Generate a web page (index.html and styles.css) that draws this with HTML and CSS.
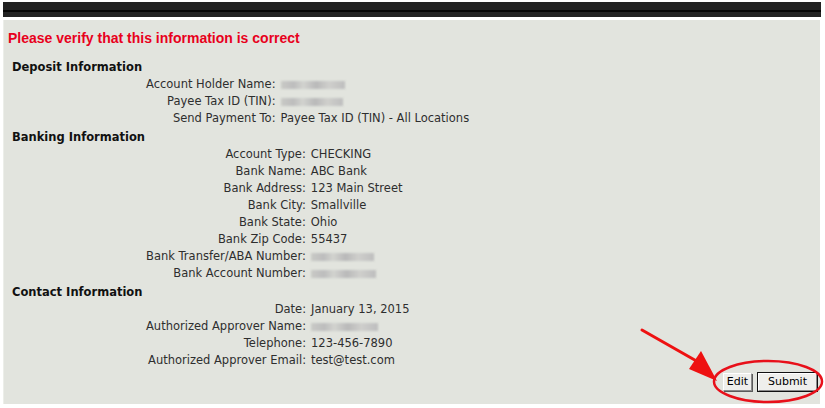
FILE: index.html
```html
<!DOCTYPE html>
<html>
<head>
<meta charset="utf-8">
<link rel="stylesheet" href="styles.css">
</head>
<body>
<div class="topbar"><div class="topbar-line"></div></div>
<div class="panel">
  <div class="title">Please verify that this information is correct</div>

  <div class="section-head">Deposit Information</div>
  <div class="fields">
    <div class="label">Account Holder Name:</div><div class="value"><span class="redacted w64"></span></div>
    <div class="label">Payee Tax ID (TIN):</div><div class="value"><span class="redacted w62"></span></div>
    <div class="label">Send Payment To:</div><div class="value">Payee Tax ID (TIN) - All Locations</div>
  </div>

  <div class="section-head">Banking Information</div>
  <div class="fields">
    <div class="label">Account Type:</div><div class="value">CHECKING</div>
    <div class="label">Bank Name:</div><div class="value">ABC Bank</div>
    <div class="label">Bank Address:</div><div class="value">123 Main Street</div>
    <div class="label">Bank City:</div><div class="value">Smallville</div>
    <div class="label">Bank State:</div><div class="value">Ohio</div>
    <div class="label">Bank Zip Code:</div><div class="value">55437</div>
    <div class="label">Bank Transfer/ABA Number:</div><div class="value"><span class="redacted w63"></span></div>
    <div class="label">Bank Account Number:</div><div class="value"><span class="redacted w65"></span></div>
  </div>

  <div class="section-head">Contact Information</div>
  <div class="fields">
    <div class="label">Date:</div><div class="value">January 13, 2015</div>
    <div class="label">Authorized Approver Name:</div><div class="value"><span class="redacted w67"></span></div>
    <div class="label">Telephone:</div><div class="value">123-456-7890</div>
    <div class="label">Authorized Approver Email:</div><div class="value">test@test.com</div>
  </div>

  <div class="actions">
    <button class="btn btn-edit">Edit</button>
    <button class="btn btn-default">Submit</button>
  </div>
</div>

<svg class="annotation" width="825" height="408" viewBox="0 0 825 408">
  <line x1="642" y1="330" x2="700" y2="363" stroke="#ee1111" stroke-width="3" stroke-linecap="round"/>
  <polygon points="701,351 689,369 717,381" fill="#ee1111"/>
  <ellipse cx="768" cy="381.5" rx="54" ry="20.5" fill="none" stroke="#e8101a" stroke-width="2.5"/>
</svg>
</body>
</html>
```
FILE: styles.css
```css
html, body {
  margin: 0;
  padding: 0;
  background: #ffffff;
}
body {
  font-family: "DejaVu Sans", Verdana, sans-serif;
  font-size: 11.5px;
  color: #2e2e2e;
  width: 825px;
  height: 408px;
  position: relative;
  overflow: hidden;
}
.topbar {
  margin: 2px 4px 0 3px;
  height: 15px;
  background: #222222;
  display: flex;
  flex-direction: column;
  justify-content: center;
}
.topbar-line {
  height: 2px;
  background: #050505;
  margin-top: 2px;
}
.panel {
  margin: 3px 5px 0 3px;
  height: 384px;
  box-sizing: border-box;
  background: #e2e4de;
  border-left: 1px solid #eceee9;
  padding: 10px 3px 13px 4px;
  display: flex;
  flex-direction: column;
}
.title {
  font-family: "Liberation Sans", Arial, sans-serif;
  font-weight: bold;
  font-size: 14px;
  line-height: 16px;
  color: #e8001c;
  margin-bottom: 11px;
}
.section-head {
  font-weight: bold;
  color: #111111;
  line-height: 17px;
  margin-top: 2px;
  padding-left: 4px;
}
.fields {
  display: grid;
  grid-template-columns: max-content max-content;
  column-gap: 5px;
  margin-left: 138px;
  line-height: 17px;
}
.label {
  text-align: right;
  white-space: nowrap;
}
.value {
  white-space: nowrap;
}
.redacted {
  display: inline-block;
  height: 8px;
  vertical-align: -1px;
  background: linear-gradient(90deg, #c9cac6 0%, #bdbdbd 20%, #d2d3cf 35%, #b9b9b9 55%, #cfcfcc 75%, #bebebe 100%);
  filter: blur(1.2px);
}
.w62 { width: 62px; }
.w63 { width: 63px; }
.w64 { width: 64px; }
.w65 { width: 65px; }
.w67 { width: 67px; }
.actions {
  margin-top: auto;
  display: flex;
  justify-content: flex-end;
  gap: 6px;
}
.btn {
  font-family: "DejaVu Sans", Verdana, sans-serif;
  font-size: 11px;
  color: #000000;
  background: #efefec;
  height: 18px;
  padding: 0 3px;
  line-height: 14px;
  border: 1px solid;
  border-color: #ffffff #8a8a8a #8a8a8a #ffffff;
  box-shadow: 1px 1px 0 #5a5a5a;
  border-radius: 0;
}
.btn-edit {
  width: 29px;
  padding: 0;
}
.btn-default {
  outline: 1px solid #111111;
  padding: 0 9px;
}
.annotation {
  position: absolute;
  left: 0;
  top: 0;
  pointer-events: none;
}
```
